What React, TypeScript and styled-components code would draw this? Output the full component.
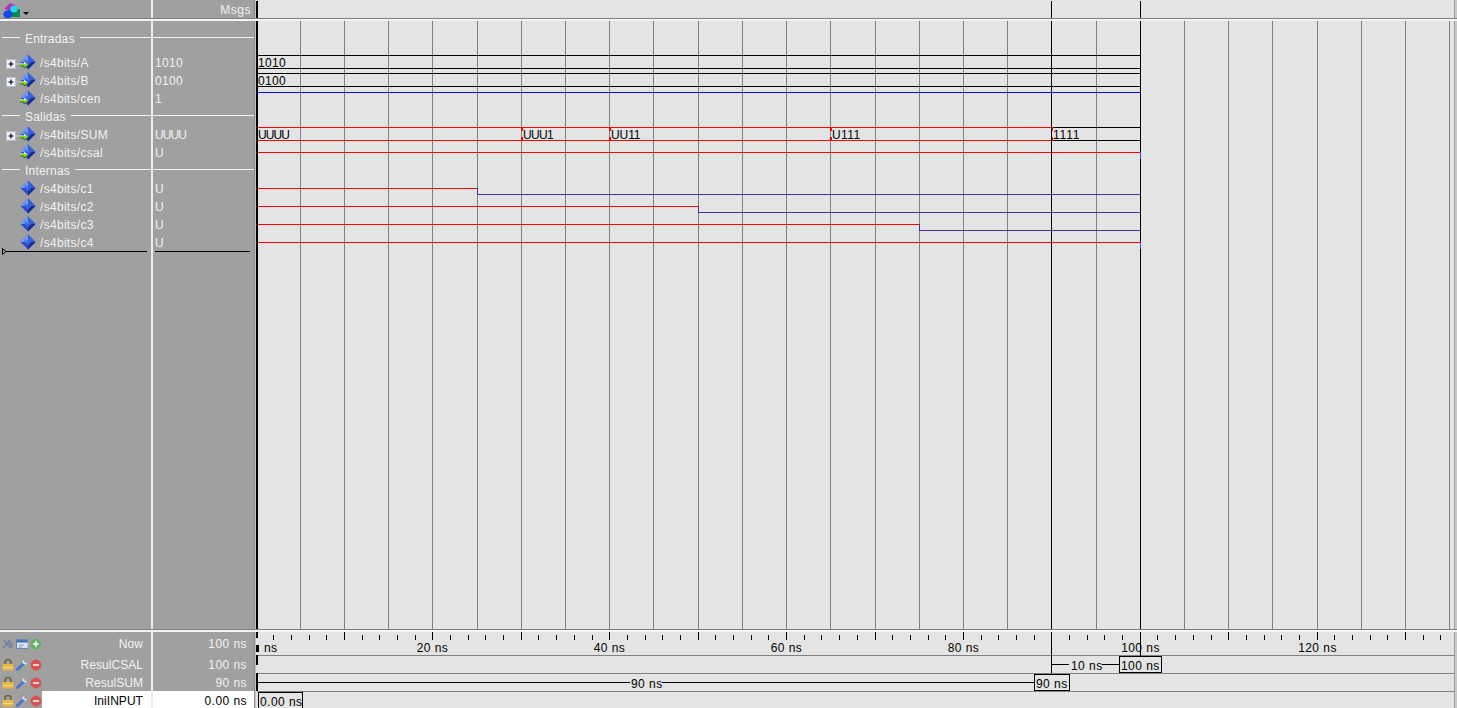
import React from "react";
import styled, { createGlobalStyle } from "styled-components";

const Global = createGlobalStyle`
  html, body { margin: 0; padding: 0; background: #a0a0a0; overflow: hidden; }
  #root { width: 1457px; height: 708px; }
`;

const Frame = styled.div`
  width: 1457px;
  height: 708px;
  display: grid;
  grid-template-rows: 18px 3px 608px 3px 76px;
  background: #a0a0a0;
  font-family: "Liberation Sans", Arial, sans-serif;
  font-size: 12px;
  color: #f2f2f2;
  overflow: hidden;
`;

const Band = styled.div`
  display: grid;
  grid-template-columns: 151px 2px 101px 2px 1201px;
  min-height: 0;
`;

const Rule = styled.div`
  border-top: 1px solid #808080;
  background: #f4f4f4;
`;

const Gutter = styled.div`
  background: #ececec;
`;

const Seam = styled.div`
  background: linear-gradient(90deg, #8c8c8c 50%, #c4c4c4 50%);
`;

const Pane = styled.div`
  display: flex;
  flex-direction: column;
  min-width: 0;
`;

const BodyPane = styled(Pane)`
  padding-top: 8px;
`;

const Canvas = styled.svg`
  display: block;
  background: #e4e4e4;
  shape-rendering: crispEdges;
`;

const MsgHead = styled.div`
  text-align: right;
  padding-right: 3px;
  letter-spacing: 0.5px;
  line-height: 20px;
`;

const LogoBox = styled.div`
  display: flex;
  padding: 2px 0 0 2px;
`;

const SectionRow = styled.div<{ $gap?: number }>`
  height: 18px;
  flex: none;
  display: flex;
  align-items: center;
  gap: 5px;
  padding-left: 2px;
  margin-bottom: ${(p) => p.$gap ?? 0}px;
  letter-spacing: 0.2px;
`;

const SectionLabel = styled.span`
  padding-top: 2px;
`;

const SectionDash = styled.span`
  width: 18px;
  height: 1px;
  margin-bottom: 1px;
  background: #f2f2f2;
  flex: none;
`;

const SectionFill = styled.span`
  flex: 1;
  height: 1px;
  margin-bottom: 1px;
  background: #f2f2f2;
`;

const ValueSection = styled.div<{ $gap?: number }>`
  height: 18px;
  flex: none;
  display: flex;
  align-items: center;
  margin-bottom: ${(p) => p.$gap ?? 0}px;
`;

const SignalRow = styled.div`
  height: 18px;
  flex: none;
  display: flex;
  align-items: center;
`;

const TreeSlot = styled.div`
  width: 20px;
  height: 18px;
  flex: none;
  display: flex;
  align-items: center;
  padding: 3px 0 0 6px;
  box-sizing: border-box;
`;

const SignalName = styled.span`
  margin-left: 4px;
  padding-top: 2px;
  letter-spacing: 0.3px;
  white-space: nowrap;
`;

const ValueRow = styled.div<{ $tight?: boolean }>`
  height: 18px;
  flex: none;
  display: flex;
  align-items: center;
  padding: 2px 0 0 2px;
  box-sizing: border-box;
  letter-spacing: ${(p) => (p.$tight ? "-0.9px" : "0.35px")};
`;

const DropLine = styled.div<{ $inset: number; $len: number }>`
  position: relative;
  height: 1px;
  flex: none;
  margin-left: ${(p) => p.$inset}px;
  width: ${(p) => p.$len}px;
  background: #000;
`;

const DropMark = styled.svg`
  position: absolute;
  left: -3px;
  top: -3px;
`;

const FootRow = styled.div<{ $h: number }>`
  height: ${(p) => p.$h}px;
  flex: none;
  display: flex;
`;

const ToolSet = styled.div<{ $drop: number }>`
  width: 42px;
  flex: none;
  display: flex;
  align-items: center;
  padding: ${(p) => p.$drop}px 0 0 2px;
  box-sizing: border-box;
  gap: 2px;
  filter: blur(0.35px);
`;

const CursorName = styled.div<{ $on?: boolean; $drop: number }>`
  flex: 1;
  display: flex;
  align-items: center;
  justify-content: flex-end;
  padding: ${(p) => p.$drop}px 8px 0 0;
  letter-spacing: 0.05px;
  background: ${(p) => (p.$on ? "#fff" : "transparent")};
  color: ${(p) => (p.$on ? "#000" : "#f2f2f2")};
`;

const CursorTime = styled.div<{ $h: number; $on?: boolean; $drop: number }>`
  height: ${(p) => p.$h}px;
  flex: none;
  display: flex;
  align-items: center;
  justify-content: flex-end;
  box-sizing: border-box;
  padding: ${(p) => p.$drop}px 7px 0 0;
  letter-spacing: 0.45px;
  background: ${(p) => (p.$on ? "#fff" : "transparent")};
  color: ${(p) => (p.$on ? "#000" : "#f2f2f2")};
`;

const WaveText = styled.text<{ $ls?: number }>`
  font-family: "Liberation Sans", Arial, sans-serif;
  font-size: 12px;
  letter-spacing: ${(p) => p.$ls ?? 0.3}px;
  fill: #000;
  shape-rendering: auto;
`;

const RulerText = styled(WaveText)`
  letter-spacing: 0.45px;
`;

const tx = (t: number) => Math.floor(256 + 8.843 * t) + 0.5;

const Logo = () => (
  <svg width="28" height="17" viewBox="0 0 28 17">
    <path d="M2 7 L8 1 L15 4 L9 9 Z" fill="#b030c0" />
    <rect x="9" y="7" width="9" height="8" fill="#108848" />
    <path d="M3 9 L8 8 L11 12 L8 16 L3 16 L1 12 Z" fill="#1048e8" />
    <circle cx="12" cy="7" r="3.6" fill="#20d8f0" />
    <path d="M21 10 L27 10 L24 13 Z" fill="#000" />
  </svg>
);

const Expander = () => (
  <svg width="14" height="12" viewBox="0 0 14 12">
    <rect x="0.5" y="1.5" width="9" height="9" fill="#f0f2fa" stroke="#b8bcd0" />
    <path d="M2.5 6 H7.5 M5 3.5 V8.5" stroke="#000" strokeWidth="1.2" />
    <path d="M10 6 H14" stroke="#e8e8e8" strokeDasharray="1 1" />
  </svg>
);

const SignalGlyph = ({ arrow }: { arrow?: boolean }) => (
  <svg width="16" height="16" viewBox="0 0 16 16">
    <path d="M8 0.5 L15.5 8 L8 15.5 L0.5 8 Z" fill="#2a4cc8" />
    <path d="M8 0.5 L8 8 L0.5 8 Z" fill="#6f9cf0" />
    <path d="M8 0.5 L15.5 8 L8 8 Z" fill="#3a5ed8" />
    <path d="M8 15.5 L15.5 8 L8 8 Z" fill="#182c90" />
    <path d="M4.5 5 L11.5 8 L8 11.5 L4.5 8 Z" fill="#3f6ce6" opacity="0.8" />
    {arrow && (
      <g>
        <path d="M0 10 H4 V8 L8.5 11 L4 14 V12 H0 Z" fill="#86e010" />
        <path d="M0 9.6 H4 V8 L7 10 H0 Z" fill="#fbfff0" />
        <path d="M0 12 H4 V14 L8.5 11" stroke="#1d4a10" strokeWidth="0.7" fill="none" />
      </g>
    )}
  </svg>
);

const NetGlyph = () => (
  <svg width="12" height="12" viewBox="0 0 12 12">
    <path d="M1 10 L5 6 L8 9 M8 2 L5 6 M2 2 L5 6" stroke="#6c7fa8" strokeWidth="1.6" fill="none" />
    <rect x="7" y="4" width="4" height="6" fill="#7d8a9a" />
  </svg>
);

const WinGlyph = () => (
  <svg width="13" height="12" viewBox="0 0 13 12">
    <rect x="0.5" y="1.5" width="12" height="9" fill="#dfe8f4" stroke="#5a80b8" />
    <rect x="1" y="2" width="11" height="2.5" fill="#3f70b0" />
    <path d="M3 7 H8 M3 9 H6" stroke="#7a9cc8" />
  </svg>
);

const CircleGlyph = ({ plus }: { plus?: boolean }) => (
  <svg width="12" height="12" viewBox="0 0 12 12">
    <circle cx="6" cy="6" r="5.4" fill={plus ? "#62b062" : "#d85050"} />
    <path d="M3 6 H9" stroke="#f6f6f6" strokeWidth="1.6" />
    {plus && <path d="M6 3 V9" stroke="#f6f6f6" strokeWidth="1.6" />}
  </svg>
);

const LockGlyph = () => (
  <svg width="12" height="12" viewBox="0 0 12 12">
    <path d="M3 6 V3.5 A3 3 0 0 1 9 3.5 V6" stroke="#6f6238" strokeWidth="1.6" fill="none" />
    <rect x="0.5" y="5" width="11" height="6.5" fill="#e6b848" />
    <path d="M1 8.5 H11" stroke="#f6da88" />
  </svg>
);

const WrenchGlyph = () => (
  <svg width="12" height="12" viewBox="0 0 12 12">
    <path d="M1.5 10.5 L7 5" stroke="#4a76c8" strokeWidth="3" strokeLinecap="round" />
    <path d="M7.5 1.5 V4 L10.5 5" stroke="#e8e8e8" strokeWidth="1.5" fill="none" />
  </svg>
);

const entries = [
  { kind: "section", name: "Entradas", gap: 6 },
  { kind: "signal", name: "/s4bits/A", value: "1010", tree: true, arrow: true },
  { kind: "signal", name: "/s4bits/B", value: "0100", tree: true, arrow: true },
  { kind: "signal", name: "/s4bits/cen", value: "1", arrow: true },
  { kind: "section", name: "Salidas" },
  { kind: "signal", name: "/s4bits/SUM", value: "UUUU", tree: true, arrow: true },
  { kind: "signal", name: "/s4bits/csal", value: "U", arrow: true },
  { kind: "section", name: "Internas" },
  { kind: "signal", name: "/s4bits/c1", value: "U" },
  { kind: "signal", name: "/s4bits/c2", value: "U" },
  { kind: "signal", name: "/s4bits/c3", value: "U" },
  { kind: "signal", name: "/s4bits/c4", value: "U" },
];

const cursors = [
  { name: "Now", time: "100 ns", h: 23, drop: 0, plus: true },
  { name: "ResulCSAL", time: "100 ns", h: 18, drop: 2 },
  { name: "ResulSUM", time: "90 ns", h: 18, drop: 2 },
  { name: "IniINPUT", time: "0.00 ns", h: 17, drop: 2, on: true },
];

const busLabels = [
  { x: 258, y: 67, text: "1010" },
  { x: 258, y: 85, text: "0100" },
  { x: 258, y: 139, text: "UUUU", ls: -0.9 },
  { x: 523, y: 139, text: "UUU1", ls: -0.7 },
  { x: 611, y: 139, text: "UU11", ls: -0.1 },
  { x: 832, y: 139, text: "U111", ls: 0.4 },
  { x: 1053, y: 139, text: "1111", ls: 0.8 },
];

const RED = "#ff0000";
const BLUE = "#0000ff";
const VIOLET = "#4334a4";
const END = tx(100);

const HLine = ({ x1, x2, y, c }: { x1: number; x2: number; y: number; c: string }) => (
  <line x1={x1} x2={x2} y1={y + 0.5} y2={y + 0.5} stroke={c} />
);
const VLine = ({ x, y1, y2, c, w = 1 }: { x: number; y1: number; y2: number; c: string; w?: number }) => (
  <line x1={x} x2={x} y1={y1} y2={y2} stroke={c} strokeWidth={w} />
);

const EdgeBars = ({ y1, y2 }: { y1: number; y2: number }) => (
  <g>
    <rect x="1454" y={y1} width="1" height={y2 - y1} fill="#a0a0a0" />
    <rect x="1455" y={y1} width="2" height={y2 - y1} fill="#c8c8c8" />
  </g>
);

const BusEdge = ({ t }: { t: number }) => (
  <g>
    <rect x={tx(t) - 0.5} y="127" width="2" height="4" fill={RED} />
    <rect x={tx(t) - 0.5} y="137" width="2" height="4" fill={RED} />
  </g>
);

const WaveBody = () => {
  const grid: number[] = [];
  for (let t = 5; t <= 135; t += 5) grid.push(t);
  return (
    <Canvas width="1201" height="608" viewBox="256 21 1201 608">
      {grid.map((t) => (
        <VLine key={t} x={tx(t)} y1={21} y2={629} c="#808080" />
      ))}

      <HLine x1={257} x2={END} y={55} c="#000" />
      <HLine x1={257} x2={END} y={68} c="#000" />
      <HLine x1={257} x2={END} y={73} c="#000" />
      <HLine x1={257} x2={END} y={86} c="#000" />

      <HLine x1={257} x2={END} y={92} c={BLUE} />
      <rect x="256" y="92" width="2" height="6" fill="#e8e020" />

      <HLine x1={257} x2={tx(90)} y={127} c={RED} />
      <HLine x1={257} x2={tx(90)} y={140} c={RED} />
      <HLine x1={tx(90)} x2={END} y={127} c="#000" />
      <HLine x1={tx(90)} x2={END} y={140} c="#000" />
      <BusEdge t={30} />
      <BusEdge t={40} />
      <BusEdge t={65} />
      <BusEdge t={90} />
      {busLabels.map((b) => (
        <WaveText key={b.text} x={b.x} y={b.y} $ls={b.ls}>{b.text}</WaveText>
      ))}

      <HLine x1={257} x2={END} y={152} c={RED} />
      <HLine x1={257} x2={END} y={242} c={RED} />
      <VLine x={END} y1={152} y2={159} c="#4444ff" />
      <VLine x={END} y1={242} y2={249} c="#4444ff" />

      <HLine x1={257} x2={tx(25)} y={188} c={RED} />
      <HLine x1={tx(25)} x2={END} y={194} c={VIOLET} />
      <HLine x1={257} x2={tx(50)} y={206} c={RED} />
      <HLine x1={tx(50)} x2={END} y={212} c={VIOLET} />
      <HLine x1={257} x2={tx(75)} y={224} c={RED} />
      <HLine x1={tx(75)} x2={END} y={230} c={VIOLET} />
      <VLine x={tx(25)} y1={188} y2={195} c={VIOLET} />
      <VLine x={tx(50)} y1={206} y2={213} c={VIOLET} />
      <VLine x={tx(75)} y1={224} y2={231} c={VIOLET} />

      <VLine x={tx(90)} y1={21} y2={629} c="#000" />
      <VLine x={END} y1={21} y2={152} c="#000" />
      <VLine x={END} y1={159} y2={242} c="#000" />
      <VLine x={END} y1={249} y2={629} c="#000" />
      <VLine x={257} y1={21} y2={629} c="#000" w={2} />
      <EdgeBars y1={21} y2={629} />
    </Canvas>
  );
};

const WaveHead = () => (
  <Canvas width="1201" height="18" viewBox="256 0 1201 18">
    <VLine x={257} y1={1} y2={18} c="#000" w={2} />
    <VLine x={tx(90)} y1={1} y2={18} c="#000" />
    <VLine x={END} y1={1} y2={18} c="#000" />
    <EdgeBars y1={0} y2={18} />
  </Canvas>
);

const Box = ({ x, y, w, h, label }: { x: number; y: number; w: number; h: number; label: string }) => (
  <g>
    <rect x={x + 0.5} y={y + 0.5} width={w} height={h} fill="#e4e4e4" stroke="#000" />
    <RulerText x={x + 2} y={y + 14}>{label}</RulerText>
  </g>
);

const WaveRuler = () => {
  const ticks: number[] = [];
  for (let t = 2; t <= 136; t += 2) ticks.push(t);
  const labels = [20, 40, 60, 80, 100, 120];
  return (
    <Canvas width="1201" height="76" viewBox="256 632 1201 76">
      {ticks.map((t) =>
        t % 10 === 0 ? (
          <VLine key={t} x={tx(t)} y1={632} y2={640} c="#000" />
        ) : (
          <VLine key={t} x={tx(t)} y1={635} y2={640} c="#000" />
        )
      )}
      <RulerText x="264" y="652">ns</RulerText>
      {labels.map((n) => (
        <RulerText key={n} x={tx(n)} y="652" textAnchor="middle">{`${n} ns`}</RulerText>
      ))}

      <HLine x1={257} x2={1454} y={655} c="#808080" />
      <HLine x1={257} x2={1454} y={673} c="#808080" />
      <HLine x1={257} x2={1454} y={691} c="#808080" />

      <VLine x={257} y1={632} y2={638} c="#000" w={2} />
      <VLine x={257} y1={645} y2={652} c="#000" w={3} />
      <VLine x={257} y1={655} y2={665} c="#000" w={2} />
      <VLine x={257} y1={673} y2={691} c="#000" w={2} />

      <VLine x={END} y1={640} y2={656} c="#000" />
      <VLine x={tx(90)} y1={640} y2={673} c="#000" />

      <HLine x1={1052} x2={1069} y={664} c="#000" />
      <RulerText x="1071" y="670">10 ns</RulerText>
      <HLine x1={1102} x2={1119} y={664} c="#000" />
      <Box x={1119} y={656} w={42} h={16} label="100 ns" />

      <HLine x1={257} x2={630} y={682} c="#000" />
      <RulerText x="631" y="688">90 ns</RulerText>
      <HLine x1={662} x2={1034} y={682} c="#000" />
      <Box x={1034} y={674} w={35} h={16} label="90 ns" />

      <Box x={258} y={692} w={44} h={18} label="0.00 ns" />
      <EdgeBars y1={632} y2={708} />
    </Canvas>
  );
};

export default function App() {
  return (
    <Frame>
      <Global />
      <Band>
        <LogoBox>
          <Logo />
        </LogoBox>
        <Gutter />
        <MsgHead>Msgs</MsgHead>
        <Seam />
        <WaveHead />
      </Band>
      <Rule />
      <Band>
        <BodyPane>
          {entries.map((e) =>
            e.kind === "section" ? (
              <SectionRow key={e.name} $gap={e.gap}>
                <SectionDash />
                <SectionLabel>{e.name}</SectionLabel>
                <SectionFill />
              </SectionRow>
            ) : (
              <SignalRow key={e.name}>
                <TreeSlot>{e.tree && <Expander />}</TreeSlot>
                <SignalGlyph arrow={e.arrow} />
                <SignalName>{e.name}</SignalName>
              </SignalRow>
            )
          )}
          <DropLine $inset={5} $len={142}>
            <DropMark width="5" height="7" viewBox="0 0 5 7">
              <path d="M0.5 0.5 L4 3.5 L0.5 6.5 Z" fill="none" stroke="#000" />
            </DropMark>
          </DropLine>
        </BodyPane>
        <Gutter />
        <BodyPane>
          {entries.map((e) =>
            e.kind === "section" ? (
              <ValueSection key={e.name} $gap={e.gap}>
                <SectionFill />
              </ValueSection>
            ) : (
              <ValueRow key={e.name} $tight={e.value === "UUUU"}>{e.value}</ValueRow>
            )
          )}
          <DropLine $inset={2} $len={95} />
        </BodyPane>
        <Seam />
        <WaveBody />
      </Band>
      <Rule />
      <Band>
        <Pane>
          {cursors.map((c) => (
            <FootRow key={c.name} $h={c.h}>
              <ToolSet $drop={c.drop}>
                {c.plus ? <NetGlyph /> : <LockGlyph />}
                {c.plus ? <WinGlyph /> : <WrenchGlyph />}
                <CircleGlyph plus={c.plus} />
              </ToolSet>
              <CursorName $on={c.on} $drop={c.drop}>{c.name}</CursorName>
            </FootRow>
          ))}
        </Pane>
        <Gutter />
        <Pane>
          {cursors.map((c) => (
            <CursorTime key={c.name} $h={c.h} $on={c.on} $drop={c.drop}>{c.time}</CursorTime>
          ))}
        </Pane>
        <Seam />
        <WaveRuler />
      </Band>
    </Frame>
  );
}
